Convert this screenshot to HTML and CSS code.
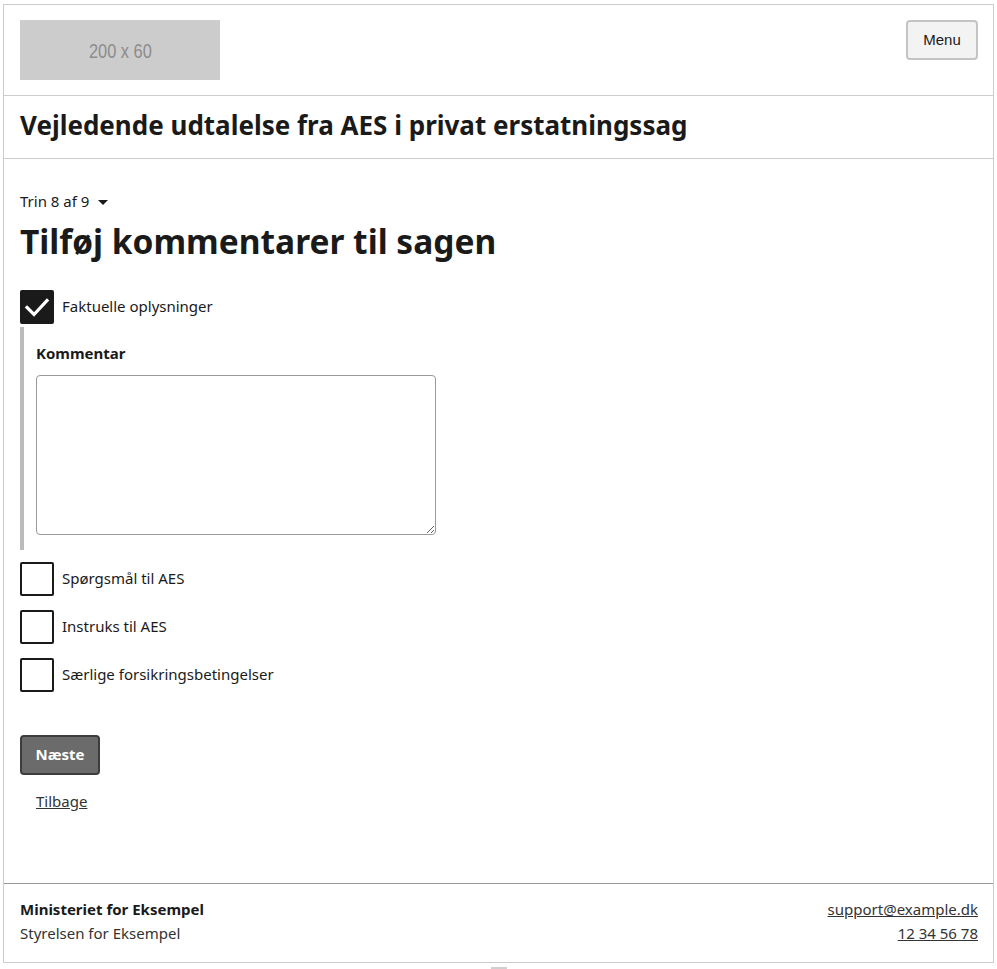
FILE: index.html
```html
<!DOCTYPE html>
<html lang="da">
<head>
<meta charset="utf-8">
<title>Vejledende udtalelse fra AES i privat erstatningssag</title>
<link rel="stylesheet" href="styles.css">
</head>
<body>
<div class="page">
  <header class="site-header">
    <div class="logo"><span class="logo-text">200 x 60</span></div>
    <button class="menu-btn" type="button">Menu</button>
  </header>
  <div class="service-bar">
    <div class="service-title">Vejledende udtalelse fra AES i privat erstatningssag</div>
  </div>
  <main class="main">
    <div class="step">Trin 8 af 9 <span class="caret"></span></div>
    <h1 class="page-title">Tilføj kommentarer til sagen</h1>
    <div class="checks">
      <label class="check">
        <span class="box checked">
          <svg viewBox="0 0 34 34" width="34" height="34"><path d="M7 17.5 L14 24.5 L27 10.5" fill="none" stroke="#fff" stroke-width="3.2" stroke-linecap="square"/></svg>
        </span>
        <span class="check-label">Faktuelle oplysninger</span>
      </label>
      <div class="reveal">
        <div class="field-label">Kommentar</div>
        <textarea class="textarea"></textarea>
      </div>
      <label class="check"><span class="box"></span><span class="check-label">Spørgsmål til AES</span></label>
      <label class="check"><span class="box"></span><span class="check-label">Instruks til AES</span></label>
      <label class="check"><span class="box"></span><span class="check-label">Særlige forsikringsbetingelser</span></label>
    </div>
    <button class="next-btn" type="button">Næste</button>
    <div class="back"><a href="#">Tilbage</a></div>
  </main>
  <footer class="site-footer">
    <div class="org">
      <div class="org-main">Ministeriet for Eksempel</div>
      <div class="org-sub">Styrelsen for Eksempel</div>
    </div>
    <div class="contact">
      <a href="#">support@example.dk</a>
      <a href="#">12 34 56 78</a>
    </div>
  </footer>
</div>
<div class="handle"></div>
</body>
</html>
```
FILE: styles.css
```css
* { box-sizing: border-box; }
html, body { margin: 0; padding: 0; background: #fff; }
body {
  font-family: "Noto Sans", "Open Sans", sans-serif;
  color: #1a1a1a;
  font-size: 15px;
  line-height: 24px;
}
.page {
  margin: 4px 3px 0 3px;
  border: 1px solid #ccc;
  min-height: 959px;
  display: flex;
  flex-direction: column;
}
.site-header {
  display: flex;
  justify-content: space-between;
  align-items: flex-start;
  padding: 15px 15px 15px 16px;
  border-bottom: 1px solid #ccc;
}
.logo {
  width: 200px;
  height: 60px;
  background: #cccccc;
  color: #8c8c8c;
  font-family: "Liberation Sans", Arial, sans-serif;
  font-size: 20px;
  display: flex;
  align-items: center;
  justify-content: center;
  padding-top: 2px;
}
.logo-text {
  display: inline-block;
  transform: scaleX(0.82);
}
.menu-btn {
  width: 72px;
  height: 40px;
  background: #f3f3f3;
  border: 2px solid #c4c4c4;
  border-radius: 4px;
  font-family: "Liberation Sans", Arial, sans-serif;
  font-size: 15px;
  color: #1a1a1a;
  padding: 0 0 2px 0;
  margin: 0;
}
.service-bar {
  padding: 11px 16px 15px 16px;
  border-bottom: 1px solid #ccc;
}
.service-title {
  font-size: 26px;
  font-weight: 700;
  line-height: 36px;
}
.main {
  flex: 1;
  padding: 30px 16px 40px 16px;
}
.step {
  display: flex;
  align-items: center;
  font-size: 15px;
  line-height: 24px;
}
.caret {
  display: inline-block;
  width: 0;
  height: 0;
  margin-left: 9px;
  margin-top: 2px;
  border-left: 5px solid transparent;
  border-right: 5px solid transparent;
  border-top: 5px solid #1a1a1a;
}
.page-title {
  margin: 6px 0 0 0;
  font-size: 33.5px;
  line-height: 44px;
  font-weight: 700;
}
.checks {
  margin-top: 27px;
  display: flex;
  flex-direction: column;
  align-items: flex-start;
}
.check {
  display: flex;
  align-items: center;
  gap: 8px;
  margin-bottom: 14px;
}
.check:first-child { margin-bottom: 3px; }
.box {
  width: 34px;
  height: 34px;
  border: 2px solid #1a1a1a;
  border-radius: 2px;
  background: #fff;
  display: block;
}
.box.checked {
  background: #1a1a1a;
  border: none;
}
.box svg { display: block; }
.check-label {
  font-size: 15px;
  line-height: 24px;
  padding-bottom: 3px;
}
.reveal {
  border-left: 4px solid #bbbbbb;
  padding: 14px 0 15px 12px;
  margin-bottom: 12px;
}
.field-label {
  font-weight: 700;
  font-size: 15px;
  line-height: 24px;
}
.textarea {
  display: block;
  margin-top: 10px;
  width: 400px;
  height: 160px;
  border: 1px solid #999;
  border-radius: 4px;
  resize: vertical;
  font: inherit;
}
.next-btn {
  margin-top: 29px;
  width: 80px;
  height: 40px;
  background: #6b6b6b;
  color: #fff;
  border: 2px solid #3d3d3d;
  border-radius: 4px;
  font-family: inherit;
  font-size: 15px;
  font-weight: 700;
  padding: 0 0 3px 0;
}
.back {
  padding: 14px 0 0 16px;
}
.back a, .contact a {
  color: #333;
  text-decoration: underline;
}
.site-footer {
  border-top: 1px solid #999;
  display: flex;
  justify-content: space-between;
  padding: 13px 15px 17px 16px;
}
.org-main { font-weight: 700; }
.org-sub { color: #333; }
.contact {
  display: flex;
  flex-direction: column;
  align-items: flex-end;
}
.handle {
  width: 16px;
  height: 2px;
  background: #cfcfcf;
  margin: 4px auto 0;
}
```
